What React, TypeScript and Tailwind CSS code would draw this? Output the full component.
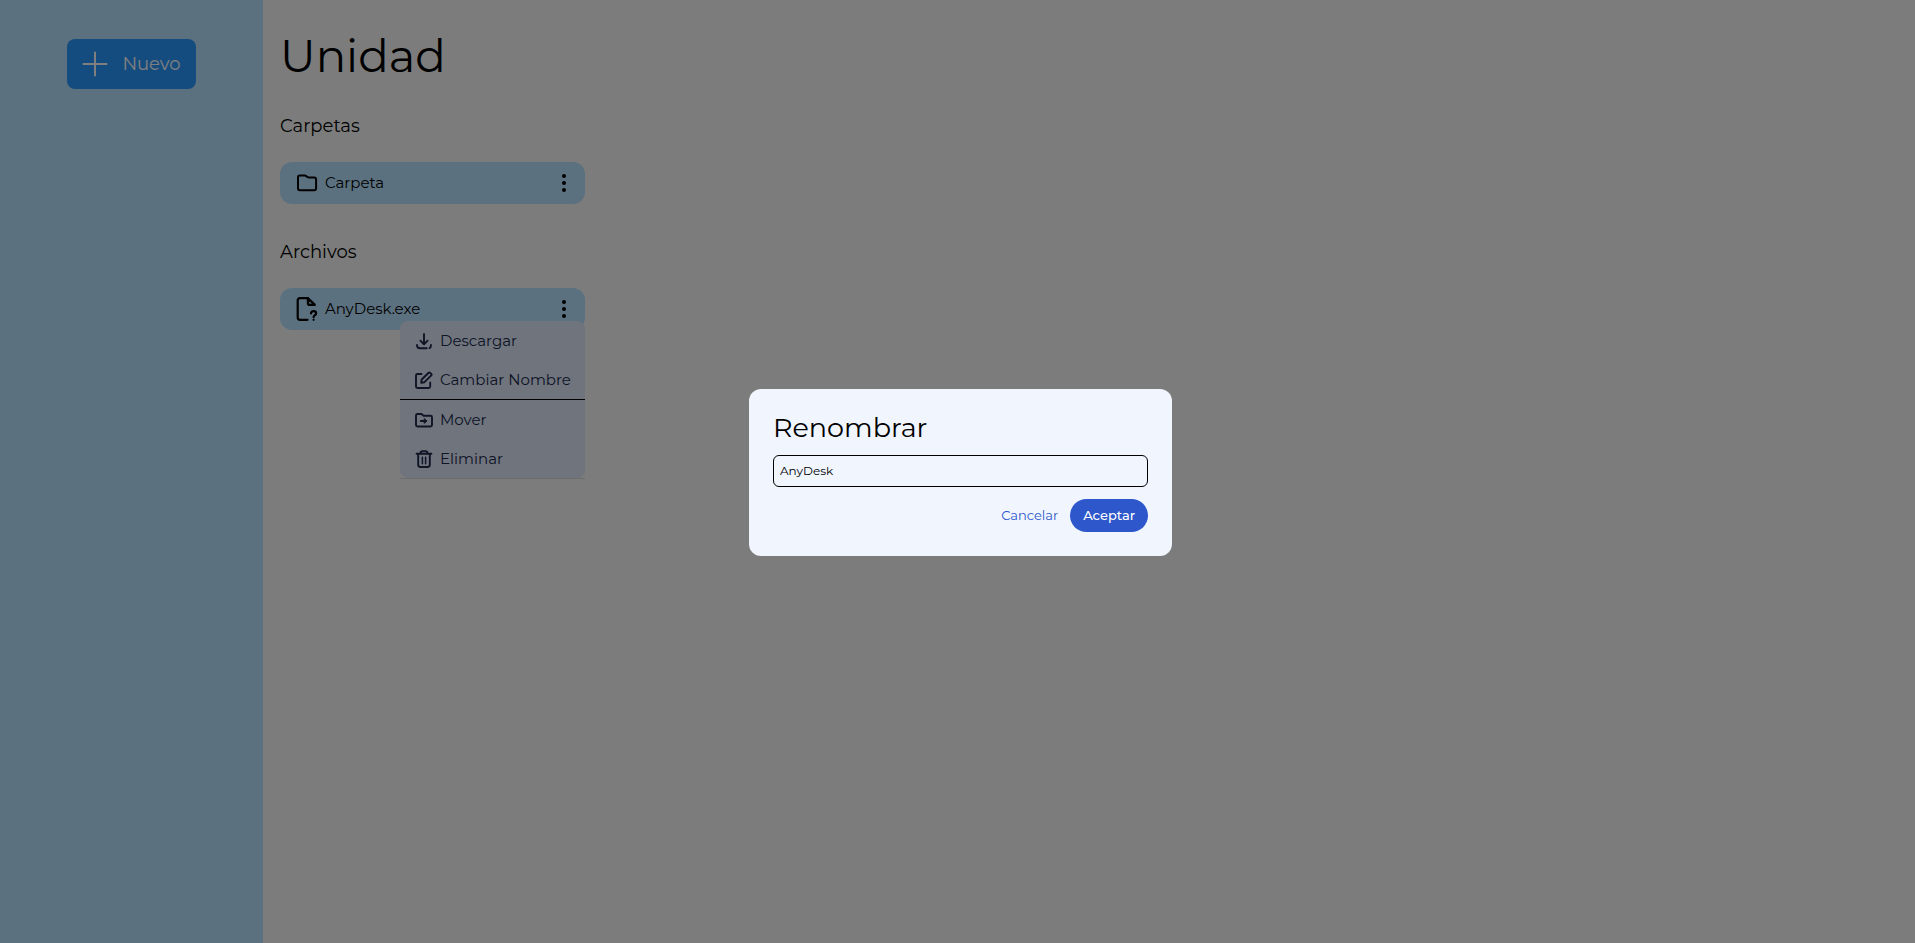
import type { ReactNode } from "react";

function Icon({ size, children }: { size: number; children: ReactNode }) {
  return (
    <svg
      width={size}
      height={size}
      viewBox={`0 0 ${size} ${size}`}
      fill="none"
      stroke="currentColor"
      strokeWidth={1.9}
      strokeLinecap="round"
      strokeLinejoin="round"
      aria-hidden="true"
      className="shrink-0"
    >
      {children}
    </svg>
  );
}

const folderIcon = (
  <Icon size={24}>
    <path strokeWidth={2} d="M2 6.3C2 5 2.5 4.6 3.8 4.6H8.5C9.5 4.6 10 4.8 10.6 5.4L11.4 6C12 6.5 12.500 6.600 13.300 6.600H18.200C19.500 6.600 20.100 7.200 20.100 8.500V17.200C20.100 18.600 19.500 19.200 18.200 19.200H4C2.600 19.200 2 18.600 2 17.200Z" />
  </Icon>
);

const fileIcon = (
  <Icon size={24}>
    <path strokeWidth={2.2} d="M11.500 22.800H4C2.500 22.800 1.700 22 1.700 20.500V3.500C1.700 2 2.500 1.200 4 1.200H12" />
    <path strokeWidth={2.4} d="M12 1.400L18.600 7.700V7.900H13.600C12.500 7.900 12 7.400 12 6.300Z" />
    <path strokeWidth={2.2} d="M15 16.400C15.200 14.900 16.300 14.200 17.600 14.200C19.100 14.200 20.100 15.100 20.100 16.400C20.100 18.200 17.600 18.200 17.600 20.200M17.600 22.800V22.810" />
  </Icon>
);

const downloadIcon = (
  <Icon size={20}>
    <path d="M10 3V13M6.400 9.700L10 13.300L13.600 9.700M3 14C3 16.500 3.800 17.300 6 17.300H12.700M17 14C17 15.700 16.600 16.700 15.500 17.100" />
  </Icon>
);

const editIcon = (
  <Icon size={20}>
    <path d="M7.500 4H3.500C2.500 4 2 4.500 2 5.500V16.500C2 17.500 2.500 18 3.500 18H14.700C15.700 18 16.200 17.500 16.200 16.500V12.500" />
    <path d="M7.200 12.800L7.700 9.500L14.600 2.700Q15.300 2 16 2.700L17.300 4Q18 4.700 17.300 5.400L10.500 12.200Z" />
  </Icon>
);

const moveIcon = (
  <Icon size={20}>
    <path d="M2 5.500C2 4.500 2.500 4 3.500 4H7.500L9.500 5.700H16.500C17.500 5.700 18 6.200 18 7.200V15C18 16 17.500 16.500 16.500 16.500H3.500C2.500 16.500 2 16 2 15Z" />
    <path d="M6.800 11H11" />
    <path fill="currentColor" strokeWidth={1} d="M10.500 8.900L13 11L10.500 13.100Z" />
  </Icon>
);

const trashIcon = (
  <Icon size={20}>
    <path d="M2.600 4.700H17.400M6.300 4.500C6.500 2.800 7.300 2.100 8.600 2.100H11.400C12.700 2.100 13.500 2.800 13.700 4.500M4.200 5V15.800C4.200 17.300 5 18 6.400 18H13.600C15 18 15.800 17.300 15.800 15.800V5" />
    <path strokeWidth={1.500} d="M8.400 8.300V14.700M11.600 8.300V14.700" />
  </Icon>
);

function MenuItem({ icon, label }: { icon: ReactNode; label: string }) {
  return (
    <li>
      <button type="button" className="flex h-[39px] w-full items-center gap-1.5 px-3.5 whitespace-nowrap">
        {icon}
        {label}
      </button>
    </li>
  );
}

function Row({ icon, name, children }: { icon: ReactNode; name: string; children?: ReactNode }) {
  return (
    <div className="relative flex h-[42px] w-[305px] items-center gap-[5px] rounded-xl bg-[#b8e2fe] pr-2 pl-4 text-[15px] leading-5">
      {icon}
      <span className="grow">{name}</span>
      <button type="button" aria-label={`Opciones de ${name}`} className="p-0.5">
        <svg width="22" height="22" viewBox="0 0 22 22" fill="currentColor" aria-hidden="true">
          <circle cx="11" cy="4" r="2" />
          <circle cx="11" cy="11" r="2" />
          <circle cx="11" cy="18" r="2" />
        </svg>
      </button>
      {children}
    </div>
  );
}

export default function App() {
  return (
    <div className="flex min-h-screen bg-[#f6f9f7] font-['Montserrat','Inter',sans-serif] text-black">
      <aside className="flex w-[263px] shrink-0 flex-col items-center bg-[#b8e2fe] pt-[39px]">
        <button type="button" className="flex h-[50px] items-center gap-3.5 rounded-lg bg-[#2a98ff] px-[15px] text-lg text-white">
          <svg width="26" height="26" viewBox="0 0 26 26" stroke="currentColor" strokeWidth="2" strokeLinecap="round" aria-hidden="true">
            <path d="M13 1.500V24.500M1.500 13H24.500" />
          </svg>
          Nuevo
        </button>
      </aside>

      <main className="grow px-[17px] pt-8">
        <h1 className="text-[45px] leading-12">Unidad</h1>
        <div className="flex flex-col gap-[34px] pt-8">
          <section>
            <h2 className="pb-[22px] text-lg leading-7">Carpetas</h2>
            <Row icon={folderIcon} name="Carpeta" />
          </section>
          <section>
            <h2 className="pb-[22px] text-lg leading-7">Archivos</h2>
            <Row icon={fileIcon} name="AnyDesk.exe">
              <div className="absolute top-[33px] right-0 w-[185px] border-b border-[#d8d8d8]">
                <ul className="rounded-lg bg-[#dee9fb] text-[#20294d]">
                  <MenuItem icon={downloadIcon} label="Descargar" />
                  <MenuItem icon={editIcon} label="Cambiar Nombre" />
                  <li role="separator" className="border-t border-black" />
                  <MenuItem icon={moveIcon} label="Mover" />
                  <MenuItem icon={trashIcon} label="Eliminar" />
                </ul>
              </div>
            </Row>
          </section>
        </div>
      </main>

      <div className="fixed inset-0 flex items-center justify-center bg-black/50 pt-0.5 pl-1.5">
        <form role="dialog" aria-labelledby="rename-title" className="w-[423px] rounded-xl bg-[#f0f5fe] p-6" onSubmit={(e) => e.preventDefault()}>
          <h2 id="rename-title" className="text-[27px] leading-[30px]">Renombrar</h2>
          <input
            type="text"
            aria-labelledby="rename-title"
            defaultValue="AnyDesk"
            className="mt-3 h-8 w-full rounded-md border border-black px-1.5 pb-0.5 text-xs"
          />
          <div className="mt-3 flex justify-end gap-3 text-[13px]">
            <button type="button" className="text-[#2d57cb]">Cancelar</button>
            <button type="submit" className="h-[33px] rounded-full bg-[#2d57cb] px-[13px] font-medium text-white">Aceptar</button>
          </div>
        </form>
      </div>
    </div>
  );
}
